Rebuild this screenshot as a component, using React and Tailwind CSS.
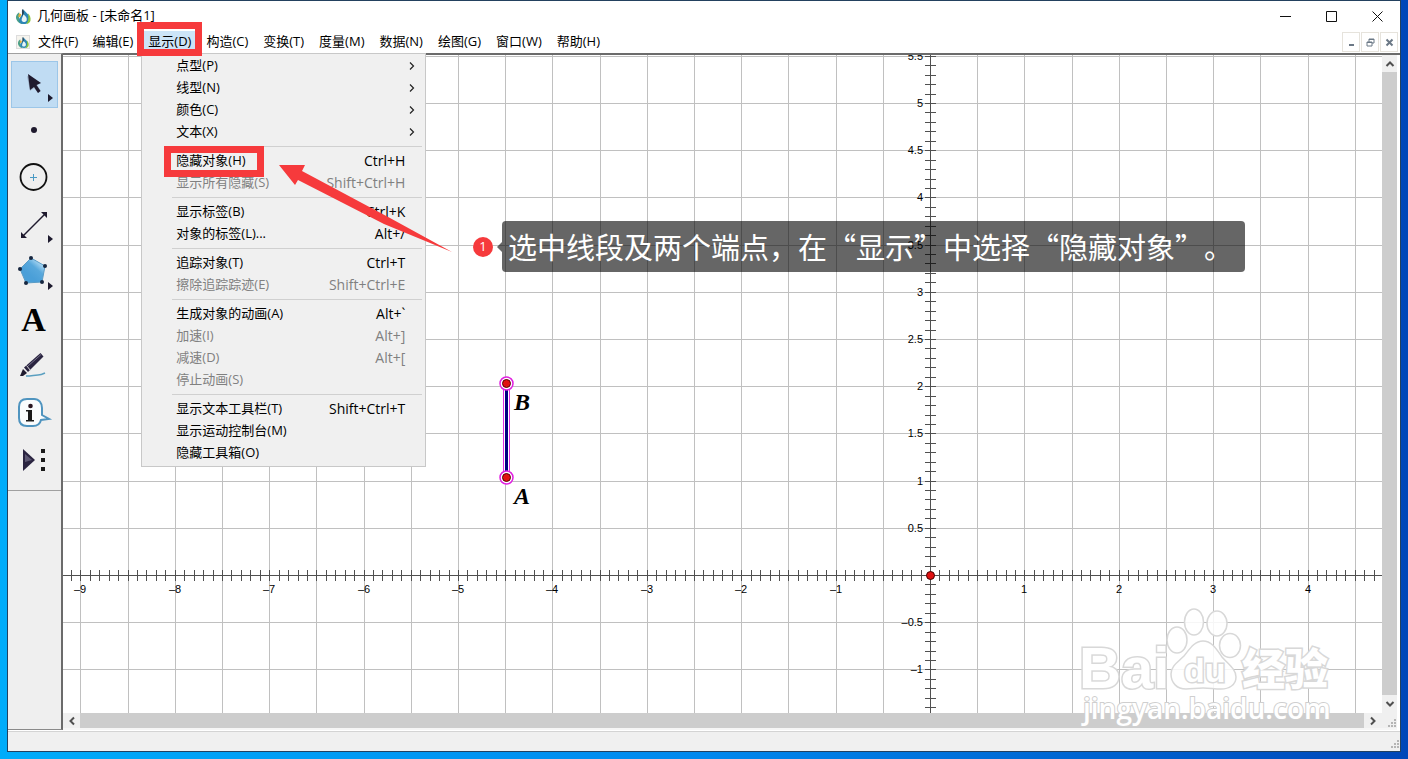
import { useState } from 'react';

const UI_FONT = "font-['Open_Sans','Noto_Sans_CJK_SC',sans-serif]";

/* ─── Menu data ──────────────────────────────────────── */

const menusBefore = ['文件(F)', '编辑(E)'];
const menusAfter = ['构造(C)', '变换(T)', '度量(M)', '数据(N)', '绘图(G)', '窗口(W)', '帮助(H)'];

const displayMenu = [
  [
    { label: '点型(P)', submenu: true },
    { label: '线型(N)', submenu: true },
    { label: '颜色(C)', submenu: true },
    { label: '文本(X)', submenu: true },
  ],
  [
    { label: '隐藏对象(H)', keys: 'Ctrl+H', marked: true },
    { label: '显示所有隐藏(S)', keys: 'Shift+Ctrl+H', disabled: true },
  ],
  [
    { label: '显示标签(B)', keys: 'Ctrl+K' },
    { label: '对象的标签(L)...', keys: 'Alt+/' },
  ],
  [
    { label: '追踪对象(T)', keys: 'Ctrl+T' },
    { label: '擦除追踪踪迹(E)', keys: 'Shift+Ctrl+E', disabled: true },
  ],
  [
    { label: '生成对象的动画(A)', keys: 'Alt+`' },
    { label: '加速(I)', keys: 'Alt+]', disabled: true },
    { label: '减速(D)', keys: 'Alt+[', disabled: true },
    { label: '停止动画(S)', disabled: true },
  ],
  [
    { label: '显示文本工具栏(T)', keys: 'Shift+Ctrl+T' },
    { label: '显示运动控制台(M)' },
    { label: '隐藏工具箱(O)' },
  ],
];

/* ─── Small drawings ─────────────────────────────────── */

function AppLogo({ size }) {
  return (
    <svg width={size} height={size} viewBox="1 1 14 14" aria-hidden="true">
      <path d="M4 4C1 6 0 9 2 12c1 2 4 3.500 6 3-3-1-5-4-4-11z" fill="#4aa08a" />
      <path d="M8 1c1 3 6 5 6 9 0 3-2.500 5-5.500 5S3 13 4 10c1-2 4-4 4-9z" fill="#2d86b5" />
      <path d="M8 6c2 2 3.500 3 3 5.500-.5 1.500-2 2-3.500 1.500C5 12 7 9 8 6z" fill="#e8f4f6" />
      <path d="M7 1c1.500 1 2 3 1 5L6.500 8C7 5 6 3 7 1z" fill="#25465a" />
      <path d="M12 5c2 2 3 4 2.500 7-.5 1.500-2 3-4 3 2.500-3 2.500-6 1.500-10z" fill="#8cc63f" />
      <path d="M4 5l2 1-1 3-2-1z" fill="#e6b13c" />
    </svg>
  );
}

const More = () => <path d="M38 33l5 4-5 4z" fill="#1d1a2e" />;

const tools = [
  {
    id: '移动箭头工具',
    art: (
      <>
        <path d="M17 15l3 15 4-3 4 5 3-2-4-6 4-2z" fill="#9fb2c8" />
        <path d="M18 13l2 16 4-3 4 6 2.500-2-4-6 4.500-2z" fill="#1f1a2e" />
        <More />
      </>
    ),
  },
  { id: '点工具', art: <circle cx="24" cy="22" r="3" fill="#1f1a2e" /> },
  {
    id: '圆工具',
    art: (
      <>
        <circle cx="23.500" cy="22" r="13" fill="none" stroke="#111" strokeWidth="1.800" />
        <path d="M20 22.500h7M23.500 19v7" stroke="#4a9ac4" />
      </>
    ),
  },
  {
    id: '线段工具',
    art: (
      <>
        <path d="M12 35L35 12" stroke="#1f1a2e" strokeWidth="1.500" />
        <path d="M37 10v6l-6-6zM11 36h6l-6-6z" fill="#1f1a2e" />
        <More />
      </>
    ),
  },
  {
    id: '多边形工具',
    art: (
      <>
        <defs>
          <linearGradient id="poly" x1="1" y1="0" x2="0.400" y2="0.700">
            <stop offset="0" stopColor="#3f95cf" />
            <stop offset="0.300" stopColor="#a8d6f2" />
            <stop offset="0.600" stopColor="#58a8dc" />
            <stop offset="1" stopColor="#4a9fd8" />
          </linearGradient>
        </defs>
        <path d="M21 9l14 8-3 16-16 1-6-14z" fill="url(#poly)" stroke="#5a9cc6" />
        {[[21, 9], [35, 17], [32, 33], [16, 34], [10, 20]].map(([x, y]) => (
          <circle key={x} cx={x} cy={y} r="2" fill="#17263f" />
        ))}
        <More />
      </>
    ),
  },
  { id: '文本工具', text: 'A' },
  {
    id: '标记工具',
    art: (
      <>
        <path d="M10 33l3-7 4 4-4 3z" fill="#1f1a2e" />
        <path d="M14 24.500L30.500 10l3 3.500L18 29z" fill="#2a2440" />
        <path d="M18 23L31 11.500" stroke="#77728c" />
        <path d="M16.500 22.500l4 5" stroke="#ddd" />
        <path d="M16 33c6 0 8-1 12-1 3 0 5-1 7-2" fill="none" stroke="#5a9fc0" strokeWidth="1.500" />
      </>
    ),
  },
  {
    id: '信息工具',
    art: (
      <>
        <path
          d="M17 9h7c5 0 8 4 8 9v7l7 4-8 1c-1 4-4 6-8 6h-6c-5 0-8-3-8-8V17c0-5 3-8 8-8z"
          fill="#fafcfd"
          stroke="#4f94bf"
          strokeWidth="2"
        />
        <circle cx="20.500" cy="16" r="2.300" fill="#2a1620" />
        <path d="M16 20h6v10h2v1.500h-8V30h2v-8.500h-2z" fill="#1a1a1a" />
      </>
    ),
  },
  {
    id: '自定义工具',
    art: (
      <>
        <path d="M13 12l12 11-12 11z" fill="#2a2440" />
        <path d="M15 17l7 6-7 2z" fill="#5d5873" />
        <path d="M31 12h4v4h-4zM31 21h4v4h-4zM31 30h4v4h-4z" fill="#1a1a1a" />
      </>
    ),
  },
];

function Chevron({ d }) {
  return (
    <svg width="10" height="10" viewBox="0 0 10 10" aria-hidden="true">
      <path d={d} fill="none" stroke="#505050" strokeWidth="2" />
    </svg>
  );
}

function Grip() {
  return (
    <svg width="9" height="9" viewBox="0 0 9 9" aria-hidden="true">
      <path d="M6 0h2v2H6zM3 3h2v2H3zM6 3h2v2H6zM0 6h2v2H0zM3 6h2v2H3zM6 6h2v2H6z" fill="#b5b5b5" />
    </svg>
  );
}

/* ─── Coordinate plane ───────────────────────────────── */

const ORIGIN = { x: 867, y: 520 };
const UNIT = 94.4;

const range = (from, to) => Array.from({ length: to - from + 1 }, (_, i) => from + i);
const px = (v) => Math.round(ORIGIN.x + v * UNIT) + 0.5;
const py = (v) => Math.round(ORIGIN.y - v * UNIT) + 0.5;
const num = (v) => String(v).replace('-', '–');

function Plane() {
  const ax = 443.5;
  const ay = 422.5;
  const by = 328.5;

  return (
    <svg className="absolute inset-0 h-full w-full" role="img" aria-label="坐标系">
      <g stroke="#c0c0c0">
        {range(-18, 9).map((i) => (
          <line key={i} x1={px(i / 2)} x2={px(i / 2)} y1="0" y2="100%" />
        ))}
        {range(-2, 11).map((i) => (
          <line key={i} x1="0" x2="100%" y1={py(i / 2)} y2={py(i / 2)} />
        ))}
      </g>
      <g stroke="#505050">
        <line x1="0" x2="100%" y1={py(0)} y2={py(0)} />
        <line x1={px(0)} x2={px(0)} y1="0" y2="100%" />
        {range(-91, 47).map((i) => (
          <line key={i} x1={px(i / 10)} x2={px(i / 10)} y1={py(0) - 5.5} y2={py(0) + 5.5} />
        ))}
        {range(-14, 55).map((i) => (
          <line key={i} x1={px(0) - 5.5} x2={px(0) + 5.5} y1={py(i / 10)} y2={py(i / 10)} />
        ))}
      </g>
      <g className="font-['Liberation_Sans',sans-serif] text-[11px]" fill="#000">
        {range(-9, 4).filter((n) => n !== 0).map((n) => (
          <text key={n} x={px(n) - 0.5} y={py(0) + 17.5} textAnchor="middle">{num(n)}</text>
        ))}
        {range(-2, 11).filter((n) => n !== 0).map((n) => (
          <text key={n} x={px(0) - 7.5} y={py(n / 2) + 3.5} textAnchor="end">{num(n / 2)}</text>
        ))}
      </g>
      <circle cx={px(0)} cy={py(0)} r="4" fill="#e01010" stroke="#400" />

      {/* selected segment AB */}
      <rect x={ax - 3} y={by} width="6" height={ay - by} fill="#fff" stroke="#e030e0" />
      <line x1={ax} x2={ax} y1={by} y2={ay} stroke="#000080" strokeWidth="3" />
      {[ay, by].map((y) => (
        <g key={y}>
          <circle cx={ax} cy={y} r="6.500" fill="#fff" stroke="#e020e0" strokeWidth="1.500" />
          <circle cx={ax} cy={y} r="4" fill="#e01010" stroke="#500" />
        </g>
      ))}
      <g className="font-['Liberation_Serif',serif] text-2xl font-bold italic">
        <text x={ax + 7.5} y={by + 26.5}>B</text>
        <text x={ax + 7.5} y={ay + 26.5}>A</text>
      </g>
    </svg>
  );
}

/* ─── Display menu ───────────────────────────────────── */

function DisplayMenu() {
  return (
    <div
      role="menu"
      className="absolute left-0 top-full z-20 w-[285px] border border-[#c8c8c8] bg-[#f0f0f0] pb-0.5 pt-px"
    >
      {displayMenu.map((group, i) => (
        <div key={group[0].label} role="group">
          {i > 0 && <div className="my-[3px] ml-[30px] mr-[3px] h-px bg-[#d0d0d0]" />}
          {group.map((item) => (
            <button
              key={item.label}
              role="menuitem"
              disabled={item.disabled}
              className={`relative flex h-[22px] w-full items-center justify-between whitespace-nowrap pl-[34px] ${
                item.submenu ? 'pr-2' : 'pr-5'
              } ${item.disabled ? 'text-[#808080]' : 'text-black'}`}
            >
              <span>{item.label}</span>
              {item.keys && <span className="text-sm">{item.keys}</span>}
              {item.submenu && (
                <svg width="10" height="10" viewBox="0 0 10 10" aria-hidden="true">
                  <path d="M3 1.500l3.500 3.500L3 8.500" fill="none" stroke="#222" strokeWidth="1.200" />
                </svg>
              )}
              {item.marked && (
                <span className="absolute -top-1 left-[22px] z-10 h-[31px] w-[100px] border-[7px] border-[#f63a3c]" />
              )}
            </button>
          ))}
        </div>
      ))}
    </div>
  );
}

/* ─── Watermark ──────────────────────────────────────── */

function Watermark() {
  return (
    <svg
      className="pointer-events-none absolute bottom-6 right-[68px] z-30"
      width="270"
      height="135"
      viewBox="0 0 270 135"
      aria-label="Baidu 经验"
    >
      <g fill="#fff" fillOpacity="0.850" stroke="#d8d8d8" strokeWidth="1.500">
        <ellipse cx="107" cy="40" rx="10" ry="13" />
        <ellipse cx="124" cy="22" rx="9.500" ry="13" />
        <ellipse cx="147" cy="23.500" rx="10" ry="12.500" />
        <ellipse cx="160" cy="45.500" rx="10.500" ry="12" />
        <path d="M133 41c9 0 14 9 19 16 6 7 14 12 14 20s-7 12-15 12c-7 0-11-1-18-1s-11 1-17 1c-9 0-15-6-15-15 0-8 7-12 13-18 5-6 10-15 19-15z" />
        <g strokeWidth="3" paintOrder="stroke" fillOpacity="1">
          <text x="9" y="88" className="font-['Liberation_Sans',sans-serif] text-[58px] font-bold">Bai</text>
          <text x="114" y="82" className="font-['Liberation_Sans',sans-serif] text-[34px] font-bold">du</text>
          <text x="172" y="85" className="font-['Noto_Sans_CJK_SC',sans-serif] text-[43px] font-black">经验</text>
        </g>
      </g>
      <text
        x="13"
        y="119"
        fill="#fff"
        stroke="#cfcfcf"
        strokeWidth="2"
        paintOrder="stroke"
        className="font-['Open_Sans',sans-serif] text-[28px] font-semibold"
      >
        jingyan.baidu.com
      </text>
    </svg>
  );
}

export default function App() {
  const [activeTool, setActiveTool] = useState(tools[0].id);
  const [menuOpen, setMenuOpen] = useState(true);

  return (
    <div
      lang="zh-CN"
      className={`relative flex h-screen flex-col overflow-hidden bg-linear-to-r from-[#00acfa] via-[#0088ee] to-[#0046b8] px-[7px] pb-[7px] text-[13px] text-black ${UI_FONT}`}
    >
      <div className="flex min-h-0 flex-1 flex-col border border-[#23415f] bg-white">
        {/* Title bar */}
        <header className="flex h-[30px] shrink-0 items-center justify-between pl-2">
          <div className="flex items-center gap-1.5">
            <AppLogo size={15} />
            <h1>几何画板 - [未命名1]</h1>
          </div>
          <div className="flex h-full">
            {[
              ['最小化', 'M0 5.5h11'],
              ['最大化', 'M.5 .5h10v10h-10z'],
              ['关闭', 'M.5 .5l10 10M10.5 .5l-10 10'],
            ].map(([label, d]) => (
              <button key={label} aria-label={label} className="flex w-[46px] items-center justify-center">
                <svg width="11" height="11" viewBox="0 0 11 11">
                  <path d={d} fill="none" stroke="#111" />
                </svg>
              </button>
            ))}
          </div>
        </header>

        {/* Menu bar */}
        <div className="flex h-[22px] shrink-0 items-center justify-between pl-2">
          <nav className="flex h-full items-center whitespace-nowrap">
            <span className="mr-px flex size-[14px] items-center justify-center border border-[#ddd] bg-[#f6f4ee]">
              <AppLogo size={11} />
            </span>
            {menusBefore.map((m) => (
              <button key={m} className="h-full px-[7px]">{m}</button>
            ))}
            <div className="relative ml-px h-full">
              <button
                className="h-full bg-[#cce4f7] px-[7px]"
                aria-haspopup="menu"
                aria-expanded={menuOpen}
                onClick={() => setMenuOpen((v) => !v)}
              >
                显示(D)
              </button>
              {menuOpen && <DisplayMenu />}
              <span className="pointer-events-none absolute -bottom-[3px] -left-1 -right-1 -top-[9px] z-30 border-[7px] border-[#f63a3c]" />
            </div>
            {menusAfter.map((m) => (
              <button key={m} className="h-full pl-2 pr-[7px]">{m}</button>
            ))}
          </nav>
          <div className="flex gap-px pr-0.5">
            {[
              ['最小化文档', 'M2 7h5'],
              ['还原文档', 'M1 4h5v4H1zM3 4V1h5v4H6M1 4.5h5M3 1.5h5'],
              ['关闭文档', 'M1.500 1.500l6 6M7.500 1.500l-6 6'],
            ].map(([label, d]) => (
              <button
                key={label}
                aria-label={label}
                className="flex h-5 w-[18px] items-center justify-center border border-[#e6e3dc]"
              >
                <svg width="9" height="9" viewBox="0 0 9 9">
                  <path d={d} fill="none" stroke="#6b7886" strokeWidth={label === '还原文档' ? 1 : 2} />
                </svg>
              </button>
            ))}
          </div>
        </div>

        <div className="flex min-h-0 flex-1">
          {/* Toolbox */}
          <aside className="flex w-[55px] shrink-0 flex-col border-b border-r-2 border-t border-b-[#8a8a8a] border-r-[#6b6b6b] border-t-[#a0a0a0] bg-[#efefef]">
            <div className="flex flex-col border-b border-[#a0a0a0] pb-1.5 pl-[3px] pt-[7px]">
              {tools.map((tool) => (
                <button
                  key={tool.id}
                  aria-label={tool.id}
                  onClick={() => setActiveTool(tool.id)}
                  className={`flex h-[47px] w-[47px] items-center justify-center border ${
                    tool.id === activeTool ? 'border-[#9cc6e8] bg-[#c0dcf3]' : 'border-transparent'
                  }`}
                >
                  {tool.text ? (
                    <span className="pr-0.5 font-['Liberation_Serif',serif] text-[34px] font-bold leading-none">
                      {tool.text}
                    </span>
                  ) : (
                    <svg width="47" height="47" viewBox="1 0 47 47" className="shrink-0">
                      {tool.art}
                    </svg>
                  )}
                </button>
              ))}
            </div>
          </aside>

          {/* Document */}
          <main className="flex min-w-0 flex-1 flex-col border-t-2 border-[#6b6b6b] pr-[3px]">
            <div className="flex min-h-0 flex-1">
              <div className="relative min-w-0 flex-1 overflow-hidden">
                <Plane />
              </div>
              <div className="flex w-[15px] shrink-0 flex-col bg-[#f0f0f0]">
                <button aria-label="向上滚动" className="flex h-[17px] items-center justify-center">
                  <Chevron d="M1.500 7L5 3.500 8.500 7" />
                </button>
                <div className="flex-1 bg-[#cdcdcd]" />
                <button aria-label="向下滚动" className="flex h-[18px] items-center justify-center">
                  <Chevron d="M1.500 3L5 6.500 8.500 3" />
                </button>
              </div>
            </div>
            <div className="flex h-[15px] shrink-0 bg-[#f0f0f0]">
              <button aria-label="向左滚动" className="flex w-[17px] items-center justify-center">
                <Chevron d="M7 1.500L3.500 5 7 8.500" />
              </button>
              <div className="flex-1 bg-[#cdcdcd]" />
              <button aria-label="向右滚动" className="flex w-[18px] items-center justify-center">
                <Chevron d="M3 1.500L6.500 5 3 8.500" />
              </button>
              <div className="flex w-[15px] items-end justify-end">
                <Grip />
              </div>
            </div>
            <div className="h-0.5 shrink-0 bg-[#f6f6f6]" />
          </main>
        </div>

        {/* Status bar */}
        <footer className="mt-px flex h-5 shrink-0 items-end justify-end border-t border-[#d4d4d4] bg-[#f0f0f0] pb-0.5">
          <Grip />
        </footer>
      </div>

      {/* Tutorial step: arrow, number and caption */}
      <svg
        className="pointer-events-none absolute left-[278px] top-40 z-30"
        width="176"
        height="94"
        viewBox="0 0 176 94"
        aria-hidden="true"
      >
        <path d="M1 5l26 0-3 6L112 58l62 34-68-28L20 20l-3 5z" fill="#f63a3c" />
      </svg>
      <div className="absolute left-[473px] top-[221px] z-30 flex items-center">
        <span className="flex size-5 items-center justify-center rounded-full bg-[#f63a3c] text-white">1</span>
        <span className="ml-1 border-y-[5px] border-r-[5px] border-y-transparent border-r-black/60" />
        <p className="whitespace-nowrap rounded bg-black/60 pb-1 pl-1.5 pr-3 pt-[3px] font-['Noto_Sans_CJK_SC',sans-serif] text-[29px] leading-[44px] text-white [text-spacing-trim:space-all]">
          选中线段及两个端点，在“显示”中选择“隐藏对象”。
        </p>
      </div>

      <Watermark />
    </div>
  );
}
